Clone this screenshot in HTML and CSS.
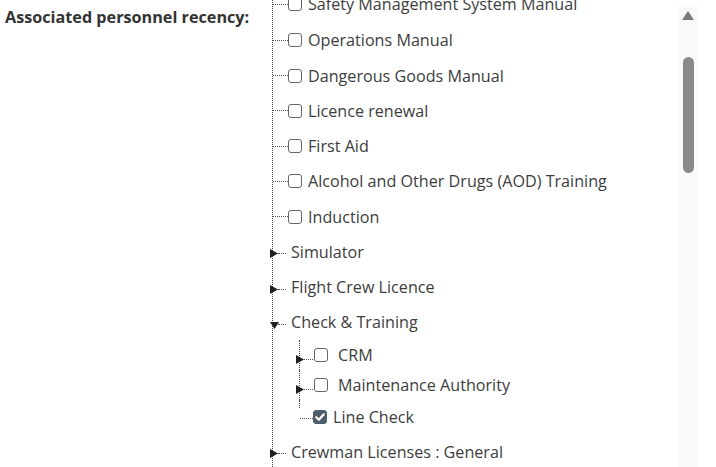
FILE: index.html
```html
<!DOCTYPE html>
<html lang="en">
<head>
<meta charset="utf-8">
<title>Associated personnel recency</title>
<link rel="stylesheet" href="styles.css">
</head>
<body>
<div class="field">
  <div class="field-label">Associated personnel recency:</div>
  <div class="tree-viewport">
    <ul class="tree">
      <li class="node"><span class="conn"></span><span class="cb"></span><span class="text">Safety Management System Manual</span></li>
      <li class="node"><span class="conn"></span><span class="cb"></span><span class="text">Operations Manual</span></li>
      <li class="node"><span class="conn"></span><span class="cb"></span><span class="text">Dangerous Goods Manual</span></li>
      <li class="node"><span class="conn"></span><span class="cb"></span><span class="text">Licence renewal</span></li>
      <li class="node"><span class="conn"></span><span class="cb"></span><span class="text">First Aid</span></li>
      <li class="node"><span class="conn"></span><span class="cb"></span><span class="text">Alcohol and Other Drugs (AOD) Training</span></li>
      <li class="node"><span class="conn"></span><span class="cb"></span><span class="text">Induction</span></li>
      <li class="node folder"><svg class="toggle closed" viewBox="0 0 8 9" width="8" height="9"><polygon points="0,0 8,4.5 0,9"/></svg><span class="conn short"></span><span class="text">Simulator</span></li>
      <li class="node folder"><svg class="toggle closed" viewBox="0 0 8 9" width="8" height="9"><polygon points="0,0 8,4.5 0,9"/></svg><span class="conn short"></span><span class="text">Flight Crew Licence</span></li>
      <li class="group">
        <div class="node folder"><svg class="toggle opened" viewBox="0 0 9 7" width="9" height="7"><polygon points="0,0 9,0 4.5,7"/></svg><span class="conn short"></span><span class="text">Check &amp; Training</span></div>
        <ul class="subtree">
          <li class="subnode folder"><svg class="toggle closed" viewBox="0 0 8 9" width="8" height="9"><polygon points="0,0 8,4.5 0,9"/></svg><span class="conn short"></span><span class="cb"></span><span class="text wide">CRM</span></li>
          <li class="subnode folder"><svg class="toggle closed" viewBox="0 0 8 9" width="8" height="9"><polygon points="0,0 8,4.5 0,9"/></svg><span class="conn short"></span><span class="cb"></span><span class="text wide">Maintenance Authority</span></li>
          <li class="subnode last"><span class="conn long"></span><span class="cb checked"><svg viewBox="0 0 14 14" width="14" height="14"><path d="M3.3 7.2 L5.9 9.8 L10.8 4.3" fill="none" stroke="#fff" stroke-width="2.2" stroke-linecap="round" stroke-linejoin="round"/></svg></span><span class="text">Line Check</span></li>
        </ul>
      </li>
      <li class="node folder"><svg class="toggle closed" viewBox="0 0 8 9" width="8" height="9"><polygon points="0,0 8,4.5 0,9"/></svg><span class="conn short"></span><span class="text">Crewman Licenses : General</span></li>
    </ul>
  </div>
  <div class="scrollbar">
    <span class="scroll-up"></span>
    <span class="scroll-thumb"></span>
  </div>
</div>
</body>
</html>
```

FILE: styles.css
```css
html, body {
  margin: 0;
  padding: 0;
  background: #fff;
}

body {
  font-family: "Open Sans", "Noto Sans", sans-serif;
  font-size: 16.15px;
  color: #3d3d3d;
  width: 716px;
  height: 467px;
  overflow: hidden;
}

.field {
  position: relative;
  display: flex;
  height: 467px;
  overflow: hidden;
}

.field-label {
  width: 259px;
  flex: none;
  padding: 6px 0 0 5px;
  font-size: 16.2px;
  font-weight: 700;
  line-height: 22px;
  color: #333;
  white-space: nowrap;
}

.tree-viewport {
  flex: 1;
  overflow: hidden;
}

.tree {
  list-style: none;
  margin: -13.5px 0 0 8px;
  padding: 0 0 40px 0;
  border-left: 1px dotted #444;
}

.tree > li {
  margin: 0;
  padding: 0;
}

.tree > li:nth-child(2) {
  margin-top: 0.9px;
}

.node {
  display: flex;
  align-items: center;
  height: 35.25px;
  white-space: nowrap;
}

.conn {
  flex: none;
  width: 15px;
  height: 0;
  border-top: 1px dotted #555;
}

.conn.short {
  width: 8px;
  margin-top: 4px;
}

.conn.long {
  width: 13px;
}

.cb {
  flex: none;
  box-sizing: border-box;
  width: 14px;
  height: 14px;
  border: 1px solid #666;
  border-radius: 3px;
  background: #fff;
  display: flex;
}

.cb.checked {
  background: #4d5d6b;
  border-color: #4d5d6b;
}

.cb.checked svg {
  margin: -1px;
}

.text {
  margin-left: 6px;
  line-height: 22px;
}

.folder > .text {
  margin-left: 5px;
}

.toggle {
  flex: none;
  display: block;
  fill: #1f1f1f;
  margin-left: -3px;
  margin-top: 4px;
}

.toggle.opened {
  margin-top: 6px;
  margin-right: -1px;
}

.subtree {
  list-style: none;
  margin: 0 0 0 26px;
  padding: 0;
}

.subnode {
  position: relative;
  display: flex;
  align-items: center;
  height: 30px;
  border-left: 1px dotted #444;
  white-space: nowrap;
}

.subnode .toggle {
  margin-left: -4px;
  margin-top: 9px;
}

.subnode .conn.short {
  width: 9px;
  margin-top: 9px;
}

.subnode .cb {
  margin-left: 1px;
}

.subnode.last .cb {
  margin-left: 0;
}

.subnode .text.wide {
  margin-left: 10px;
}

.subnode.last {
  height: 34px;
  border-left: none;
  padding-left: 1px;
}

.subnode.last::before {
  content: "";
  position: absolute;
  left: 0;
  top: 0;
  height: 8px;
  border-left: 1px dotted #444;
}

.subnode.last .conn {
  margin-top: 3px;
}

.subnode.last .cb {
  margin-top: 1px;
}

.scrollbar {
  position: absolute;
  left: 679px;
  top: 5px;
  width: 19px;
  bottom: 0;
  background: #fafafa;
}

.scroll-up {
  position: absolute;
  left: 3px;
  top: 6px;
  width: 0;
  height: 0;
  border-bottom: 9px solid #7a7a7a;
  border-left: 6.5px solid transparent;
  border-right: 6.5px solid transparent;
}

.scroll-thumb {
  position: absolute;
  left: 4px;
  top: 52px;
  width: 11px;
  height: 116px;
  border-radius: 6px;
  background: #8a8a8a;
}
```
